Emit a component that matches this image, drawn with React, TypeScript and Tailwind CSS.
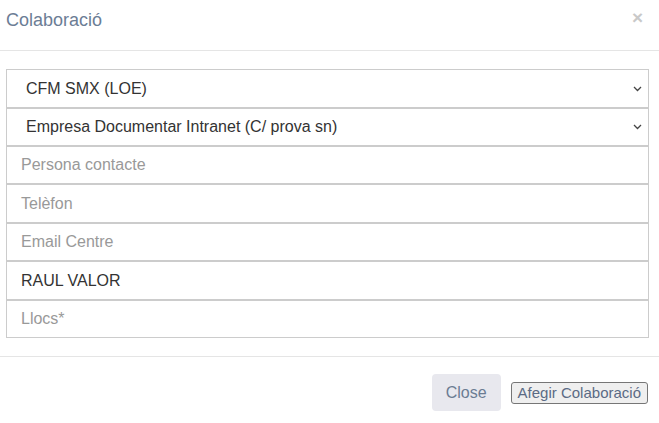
const FIELDS: { label: string; value?: string; select?: boolean; h: string }[] = [
  { label: "CFM SMX (LOE)", value: "CFM SMX (LOE)", select: true, h: "h-[39px]" },
  { label: "Empresa Documentar Intranet (C/ prova sn)", value: "Empresa Documentar Intranet (C/ prova sn)", select: true, h: "h-[38px]" },
  { label: "Persona contacte", h: "h-[38px]" },
  { label: "Telèfon", h: "h-[39px]" },
  { label: "Email Centre", h: "h-[38px]" },
  { label: "RAUL VALOR", value: "RAUL VALOR", h: "h-[39px]" },
  { label: "Llocs*", h: "h-[38px]" },
];

function Chevron() {
  return (
    <svg width="9" height="6" viewBox="0 0 9 6" className="shrink-0">
      <path d="M1 1l3.5 3.5L8 1" fill="none" stroke="#444" strokeWidth="1.3" />
    </svg>
  );
}

export default function App() {
  return (
    <div className="h-[423px] w-[659px] overflow-hidden bg-white font-['Liberation_Sans',Arial,sans-serif]">
      <div className="flex h-[51px] items-start justify-between border-b border-[#e5e5e5] pl-[6px] pr-[16px] pt-[8px]">
        <h4 className="text-[18px] leading-[24px] text-[#6c7d95]">Colaboració</h4>
        <span className="mt-[-2px] text-[19px] font-bold leading-[24px] text-[#c9c9c9]">×</span>
      </div>

      <div className="flex flex-col pl-[6px] pr-[10px] pt-[18px] pb-[18px]">
        {FIELDS.map((f) => (
          <div
            key={f.label}
            className={`flex ${f.h} items-center border border-[#cccccc] bg-white pr-[6px] ${f.select ? "pl-[19px]" : "pl-[14px]"}`}
          >
            <span className={`flex-1 text-[16px] ${f.value ? "text-[#333]" : "text-[#999]"}`}>{f.label}</span>
            {f.select && <Chevron />}
          </div>
        ))}
      </div>

      <div className="flex items-center justify-end gap-[10px] border-t border-[#e5e5e5] pr-[11px] pt-[17px]">
        <button className="h-[37px] w-[69px] rounded-[4px] bg-[#e8e8ee] text-[16px] text-[#6b7c93]">Close</button>
        <button className="h-[22px] rounded-[3px] border border-[#767676] bg-[#efefef] px-[6px] text-[15px] leading-[20px] text-[#5b6b85]">
          Afegir Colaboració
        </button>
      </div>
    </div>
  );
}
